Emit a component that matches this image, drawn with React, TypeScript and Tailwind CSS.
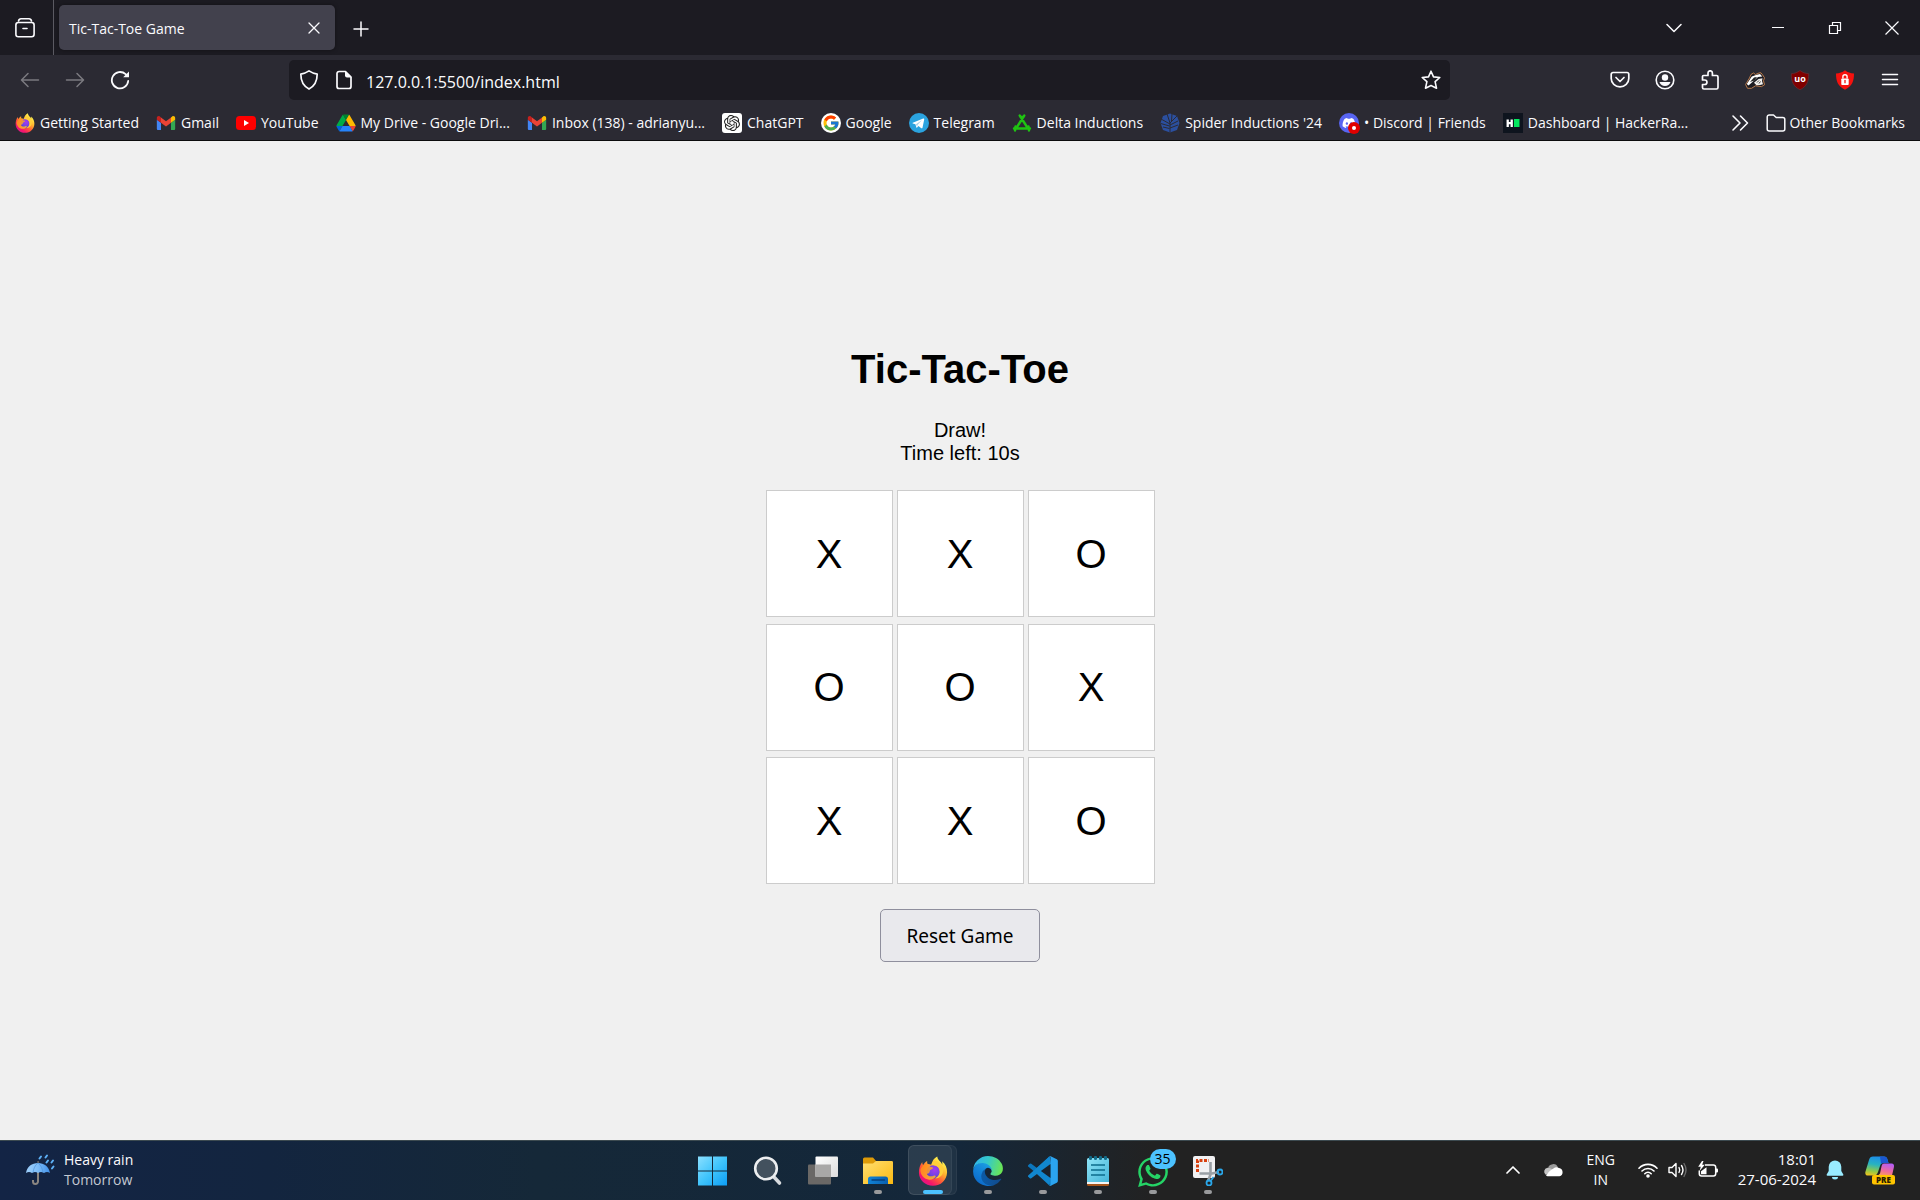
import React, { useState } from "react";
import { FcGoogle } from "react-icons/fc";
import { SiOpenai } from "react-icons/si";
import { FaDiscord, FaWhatsapp } from "react-icons/fa";

type IconProps = { className?: string; id?: string };

/* ---------- line icons of the browser chrome ---------- */

function Stroke({ children, className = "size-5", w = 1.5 }: { children: React.ReactNode; className?: string; w?: number }) {
  return (
    <svg viewBox="0 0 20 20" className={className} fill="none" stroke="currentColor" strokeWidth={w} strokeLinecap="round" strokeLinejoin="round" aria-hidden="true">
      {children}
    </svg>
  );
}

const ViewIcon = () => (
  <Stroke w={1.6}>
    <path d="M3.500 3Q4 .8 6 .8H14Q16 .8 16.500 3" />
    <rect x="0.900" y="4.500" width="18.200" height="14.300" rx="2.500" />
    <path d="M8 10.500h4" />
  </Stroke>
);
const BackIcon = () => (
  <Stroke>
    <path d="M18.500 10H1.800M8 3.500 1.500 10 8 16.500" />
  </Stroke>
);
const ForwardIcon = () => (
  <Stroke>
    <path d="M1.500 10h16.700M12 3.500l6.500 6.500-6.500 6.500" />
  </Stroke>
);
const ReloadIcon = () => (
  <Stroke w={1.8}>
    <path d="M18.200 11A8.200 8.200 0 1 1 15.600 4.200L17 5.500" />
    <path d="M19 1.500v5.800h-5.800z" fill="currentColor" stroke="none" />
  </Stroke>
);
const ShieldIcon = () => (
  <Stroke w={1.7}>
    <path d="M10 .9c2.500 1.700 5 2.700 8.200 3.200 0 6.200-1.700 11.600-8.200 15C3.500 15.700 1.800 10.300 1.800 4.100 5 3.600 7.500 2.600 10 .9z" />
  </Stroke>
);
const PageIcon = () => (
  <Stroke w={1.7}>
    <path d="M11.500 1.500H5a2 2 0 0 0-2 2v13a2 2 0 0 0 2 2h10a2 2 0 0 0 2-2V7z" />
    <path d="M11 1v4.500a2 2 0 0 0 2 2h4.500z" fill="currentColor" stroke="none" />
  </Stroke>
);
const StarIcon = () => (
  <Stroke w={1.6}>
    <path d="M10 1.200l2.500 5.700 6.300.6-4.700 4.200 1.400 6.500L10 15.500l-5.500 2.700 1.400-6.500L1.200 7.500l6.300-.6z" />
  </Stroke>
);
const PocketIcon = () => (
  <Stroke w={1.7}>
    <path d="M3 2.500h14a1.800 1.800 0 0 1 1.800 1.800V8.500a8.800 8.300 0 0 1-17.600 0V4.300A1.800 1.800 0 0 1 3 2.500z" />
    <path d="M6 7.500l4 4 4-4" />
  </Stroke>
);
const AccountIcon = () => (
  <Stroke w={1.6}>
    <circle cx="10" cy="10" r="8.800" />
    <circle cx="10" cy="7.500" r="3.200" fill="currentColor" stroke="none" />
    <path d="M4.500 12h11c-.8 2.500-2.800 4-5.500 4s-4.700-1.500-5.500-4z" fill="currentColor" stroke="none" />
  </Stroke>
);
const PuzzleIcon = () => (
  <Stroke w={1.7}>
    <path d="M2.500 9V6.500a1 1 0 0 1 1-1H8V3a2.200 2.200 0 0 1 4.400 0v2.500h4.100a1.500 1.500 0 0 1 1.500 1.500v10.500a1.500 1.500 0 0 1-1.500 1.500H4a1.500 1.500 0 0 1-1.500-1.500V14.500h2.200a2.200 2.200 0 0 0 0-4.500H2.500z" />
  </Stroke>
);
const MenuIcon = () => (
  <Stroke w={1.5}>
    <path d="M2.500 4.500h15M2.500 9.500h15M2.500 14.500h15" />
  </Stroke>
);
const FolderIcon = () => (
  <Stroke w={1.5}>
    <path d="M1.200 16V4a2 2 0 0 1 2-2h4.300l2.700 2.500h6.600a2 2 0 0 1 2 2V16a2 2 0 0 1-2 2H3.200a2 2 0 0 1-2-2z" />
  </Stroke>
);
const OverflowIcon = () => (
  <Stroke w={1.6}>
    <path d="M3 3l7 7-7 7M10.500 3l7 7-7 7" />
  </Stroke>
);

/* ---------- extension icons ---------- */

const BadgerIcon = () => (
  <svg viewBox="0 0 20 20" className="size-5" aria-hidden="true">
    <path d="M.6 14.500L4.500 8 6 4.500l2.500-1.500 2 1.500 3.500-1.500L16 2.800l1.500 2 2 3-1 3 1 4-3 1.800-6-.8-4 2.500H2.500z" fill="#1c1b22" stroke="#c98550" strokeWidth=".9" />
    <path d="M1.800 14l5-7.500L11 5l4-1 2.300 2.500-4.300.5-5 4.500-4.500 4z" fill="#fff" />
    <path d="M9 12.800L13.500 9l4-.8-.5 2.800 1 3.200-3 .8-3.500.3z" fill="#f1efec" />
    <path d="M5 12l4-4.500 3-.5-2.500 3.500z" fill="#222" />
    <path d="M12 12.500l2-2M14 13.500l1.500-2" stroke="#222" strokeWidth=".9" />
  </svg>
);
const UblockIcon = () => (
  <svg viewBox="0 0 20 20" className="size-5" aria-hidden="true">
    <path d="M10 .5c2.500 2 5.500 3 8.700 3.200C18.800 11 17 16.500 10 19.700 3 16.500 1.200 11 1.300 3.700 4.500 3.500 7.500 2.500 10 .5z" fill="#800000" stroke="#65353c" strokeWidth=".6" />
    <text x="10" y="12" textAnchor="middle" fontSize="9" fontWeight="700" fill="#fff" fontFamily="Open Sans, sans-serif">uo</text>
  </svg>
);
const LockShieldIcon = () => (
  <svg viewBox="0 0 20 20" className="size-5" aria-hidden="true">
    <path d="M10 .3c2.700 2.200 5.500 3 9 3.300C19 11 17.200 16.500 10 19.800 2.800 16.500 1 11 1 3.600 4.500 3.300 7.300 2.500 10 .3z" fill="#f5120f" />
    <rect x="6.300" y="8.500" width="7.400" height="6.500" rx=".8" fill="#fff" />
    <path d="M7.900 8.500V6.800a2.100 2.100 0 0 1 4.200 0v1.700" fill="none" stroke="#fff" strokeWidth="1.400" />
    <path d="M10 10.500v2.200" stroke="#f5120f" strokeWidth="1.300" strokeLinecap="round" />
  </svg>
);

/* ---------- site icons ---------- */

function FirefoxIcon({ className = "size-5", id = "ff" }: IconProps) {
  return (
    <svg viewBox="0 0 32 32" className={className} aria-hidden="true">
      <defs>
        <linearGradient id={id + "a"} x1="0.850" y1="0.100" x2="0.200" y2="0.950">
          <stop offset=".05" stopColor="#fff44f" />
          <stop offset=".35" stopColor="#ffb22e" />
          <stop offset=".6" stopColor="#ff5b36" />
          <stop offset=".85" stopColor="#f5156c" />
          <stop offset="1" stopColor="#e31587" />
        </linearGradient>
        <radialGradient id={id + "b"} cx=".6" cy=".35" r=".7">
          <stop offset="0" stopColor="#a63bf0" />
          <stop offset=".6" stopColor="#7542e5" />
          <stop offset="1" stopColor="#4a3fc4" />
        </radialGradient>
        <linearGradient id={id + "c"} x1="0" y1="0" x2="1" y2="1">
          <stop offset="0" stopColor="#ff8a16" />
          <stop offset="1" stopColor="#ffbd30" />
        </linearGradient>
      </defs>
      <path d="M20.500.5c.3 2.500 1.800 4.200 3.600 6 .8.800 1.400 1.800 1.700 2.800.3-1.500.2-2.800-.2-3.800 3.800 3 5.600 7.400 5.400 12C30.700 25.700 24.300 31.700 16 31.700S1 25.500 1 17.500c0-4 1-8 3.500-11.200.1 1.500.4 2.500 1 3.300C6.300 8 8 6.300 9.800 5.300c-.2 1.300.1 2.500.6 3.300 1.300 0 2.600.2 3.800.7C15 5.500 17 2 20.500.5z" fill={`url(#${id}a)`} />
      <circle cx="16.300" cy="17" r="7.200" fill={`url(#${id}b)`} />
      <path d="M14.200 9.300c2 .2 5.800.5 7.800 3.500 2.500 3.800.7 9.500-4 11 5.500.2 9.500-4 9-10C26.700 9.500 23 8 20.500 5.500c-2.500-.5-5.500 1-6.300 3.800z" fill="#ffcf3a" />
      <path d="M2.500 15c1-3.500 4-6.300 7.900-6.400.6 1.300 1.600 2.200 2.500 2.800 1.600.4 3 .7 3.200 1.200-.1 1-1.800 1.600-3 2.400-.8.600-.4 1.800-1 2.700-.5.800-1.700 1.300-2.800 1.300 1.500 2.700 4.700 3.300 7 2.200 1.300-.6 2.300-.5 2.700.3-1.200 2.500-4 4-7 3.800C6.500 25 2.500 20 2.500 15z" fill={`url(#${id}c)`} opacity=".85" />
    </svg>
  );
}
const GmailIcon = () => (
  <svg viewBox="48 40 96 70" className="size-5" aria-hidden="true">
    <path fill="#4285f4" d="M58 108h14V74L52 59v43c0 3.320 2.690 6 6 6" />
    <path fill="#34a853" d="M120 108h14c3.320 0 6-2.690 6-6V59l-20 15" />
    <path fill="#fbbc04" d="M120 48v26l20-15v-8c0-7.420-8.470-11.650-14.400-7.200" />
    <path fill="#ea4335" d="M72 74V48l24 18 24-18v26L96 92" />
    <path fill="#c5221f" d="M52 51v8l20 15V48l-5.600-4.200c-5.940-4.450-14.400-.22-14.400 7.200" />
  </svg>
);
const YouTubeIcon = () => (
  <svg viewBox="0 0 20 20" className="size-5" aria-hidden="true">
    <rect x="0" y="3" width="20" height="14" rx="3.500" fill="#f00" />
    <path d="M8 7v6l5-3z" fill="#fff" />
  </svg>
);
const DriveIcon = () => (
  <svg viewBox="-2 -4 91 86" className="size-5" aria-hidden="true">
    <path d="m6.600 66.850 3.850 6.650c.8 1.400 1.950 2.500 3.300 3.300l13.750-23.800h-27.500c0 1.550.4 3.100 1.200 4.500z" fill="#0066da" />
    <path d="m43.650 25-13.750-23.800c-1.350.8-2.500 1.900-3.300 3.300l-25.400 44a9.060 9.060 0 0 0 -1.200 4.500h27.500z" fill="#00ac47" />
    <path d="m73.550 76.800c1.350-.8 2.500-1.900 3.300-3.300l1.600-2.750 7.650-13.250c.8-1.400 1.200-2.950 1.200-4.500h-27.502l5.852 11.500z" fill="#ea4335" />
    <path d="m43.650 25 13.750-23.800c-1.350-.8-2.900-1.200-4.500-1.200h-18.500c-1.600 0-3.150.45-4.500 1.200z" fill="#00832d" />
    <path d="m59.800 53h-32.300l-13.750 23.800c1.350.8 2.900 1.200 4.500 1.200h50.800c1.600 0 3.150-.45 4.500-1.200z" fill="#2684fc" />
    <path d="m73.400 26.500-12.700-22c-.8-1.400-1.950-2.500-3.300-3.300l-13.750 23.800 16.150 28h27.450c0-1.550-.4-3.100-1.200-4.500z" fill="#ffba00" />
  </svg>
);
const ChatGptIcon = () => (
  <span className="grid size-5 place-items-center rounded-[3px] bg-white">
    <SiOpenai className="size-4 text-[#222]" />
  </span>
);
const GoogleIcon = () => (
  <span className="grid size-5 place-items-center rounded-full bg-white">
    <FcGoogle className="size-[18px]" />
  </span>
);
const TelegramIcon = () => (
  <svg viewBox="0 0 20 20" className="size-5" aria-hidden="true">
    <circle cx="10" cy="10" r="10" fill="#2ba3df" />
    <path d="M3.800 9.700l10.400-4.100c.6-.2 1.200.2 1 1l-1.700 8.100c-.2.700-.7.800-1.200.5l-2.800-2.100-1.400 1.400c-.3.300-.6.200-.7-.1l-1-3.200-2.600-.8c-.5-.2-.5-.5 0-.7z" fill="#fff" />
    <path d="M7 11.300l6-4.200-4.500 4.800-.4 2z" fill="#a9cfe5" />
  </svg>
);
const DeltaIcon = () => (
  <svg viewBox="0 0 20 20" className="size-5" fill="none" stroke="#1fc312" strokeWidth="2.400" strokeLinecap="round" strokeLinejoin="round" aria-hidden="true">
    <path d="M7.700 2.500L16 15.500M12.300 2.500L4 15.500M2 15.500h16M8.500 4h3" />
    <path d="M3.500 13.500L3 17.500M16.500 13.500l.5 4" />
  </svg>
);
const SpiderIcon = () => (
  <svg viewBox="0 0 20 20" className="size-5" aria-hidden="true">
    <path d="M10 .5l7 2.500 2.500 7-2.500 7-7 2.500L3 17 .5 10 3 3z" fill="#2b4f9e" />
    <g fill="none" stroke="#2b2a33" strokeWidth="1">
      <path d="M10 19.500V10L17 3M10 12l8-4M10 15l8-3M10 10L7 .8M10 11L1 6M9.500 13L.8 10.500M9.500 15.500L3 14M11.500 8L12 1" />
    </g>
  </svg>
);
const DiscordIcon = () => (
  <span className="relative grid size-5 place-items-center rounded-full bg-[#5865f2]">
    <FaDiscord className="size-3.5 text-white" />
    <span className="absolute -right-px -bottom-px grid size-3 place-items-center rounded-full bg-[#e00000]">
      <span className="size-1 rounded-full bg-white" />
    </span>
  </span>
);
const HackerRankIcon = () => (
  <svg viewBox="0 0 20 20" className="size-5" aria-hidden="true">
    <rect width="20" height="20" fill="#0e141e" />
    <path d="M4.700 6.500V14M8.700 6.500V14M5 10.200h3.500" stroke="#fff" strokeWidth="2.300" />
    <rect x="11" y="6" width="5.500" height="8" fill="#05e85f" />
  </svg>
);

/* ---------- taskbar icons ---------- */

const UmbrellaIcon = () => (
  <svg viewBox="0 0 30 32" className="h-8 w-[30px]" aria-hidden="true">
    <defs>
      <linearGradient id="umb" x1="0" y1="0" x2="1" y2="0">
        <stop offset="0" stopColor="#9fd0fb" />
        <stop offset=".5" stopColor="#7dbcf8" />
        <stop offset="1" stopColor="#3f8fe8" />
      </linearGradient>
    </defs>
    <path d="M13 18v9.500a2.500 2.500 0 0 1-5 0V26" fill="none" stroke="#8a8580" strokeWidth="2" />
    <path d="M12.400 7h1.400v3h-1.400z" fill="#6e6a66" />
    <path d="M1 19C2 12.500 7 9 13 9s11 3.500 12 10c-2-1.300-4-1.300-6 0-2-1.300-4-1.300-6 0-2-1.300-4-1.300-6 0-2-1.300-4-1.300-6 0z" fill="url(#umb)" />
    <path d="M13 9c-3 2-4.500 6-5 9.500M13 9c3 2 4.500 6 5 9.500" stroke="#4d93dc" strokeWidth=".7" fill="none" />
    <path d="M14.500 4.500l1.500-2M20.500 3.500l1.500-2M21.500 8.500l1.500-2M26.500 8.500l1.500-2M27 14.500l1.500-2" stroke="#5db1f7" strokeWidth="2" strokeLinecap="round" />
  </svg>
);
const WindowsIcon = () => (
  <svg viewBox="0 0 30 30" className="size-[30px]" aria-hidden="true">
    <defs>
      <linearGradient id="win" gradientUnits="userSpaceOnUse" x1="0" y1="0" x2="30" y2="30">
        <stop offset="0" stopColor="#8ce0ff" />
        <stop offset=".5" stopColor="#3fc4fc" />
        <stop offset="1" stopColor="#0a9bf5" />
      </linearGradient>
    </defs>
    <path d="M0 .5h14v14H0zM15 .5h14v14H15zM0 15.500h14v14H0zM15 15.500h14v14H15z" fill="url(#win)" />
  </svg>
);
const SearchIcon = () => (
  <svg viewBox="0 0 30 30" className="size-[30px]" aria-hidden="true">
    <path d="M20 20l6.500 7" stroke="#d7dade" strokeWidth="3.600" strokeLinecap="round" />
    <circle cx="13" cy="12.500" r="10.800" fill="#43515e" stroke="#eceef0" strokeWidth="2.600" />
  </svg>
);
const TaskViewIcon = () => (
  <svg viewBox="0 0 30 30" className="size-[30px]" aria-hidden="true">
    <defs>
      <linearGradient id="tv" x1="0" y1="0" x2="1" y2="1">
        <stop offset="0" stopColor="#fff" />
        <stop offset="1" stopColor="#dcdcdc" />
      </linearGradient>
    </defs>
    <rect x="0" y="8.500" width="23" height="20" rx="1" fill="#6a6866" />
    <rect x="7.500" y=".5" width="22.500" height="20.500" rx="1" fill="url(#tv)" />
    <rect x="7.500" y="8.500" width="15.500" height="12.500" fill="#a9a8a7" />
  </svg>
);
const ExplorerIcon = () => (
  <svg viewBox="0 0 30 30" className="size-[30px]" aria-hidden="true">
    <defs>
      <linearGradient id="fold" x1="0" y1="0" x2="1" y2="1">
        <stop offset="0" stopColor="#ffdf72" />
        <stop offset="1" stopColor="#fbb911" />
      </linearGradient>
      <linearGradient id="foldb" x1="0" y1="0" x2="1" y2="0">
        <stop offset="0" stopColor="#1183d6" />
        <stop offset="1" stopColor="#0a5fae" />
      </linearGradient>
    </defs>
    <path d="M0 3a1.500 1.500 0 0 1 1.500-1.500H10L13 5h15.500A1.500 1.500 0 0 1 30 6.500V10H0z" fill="#dd9a08" />
    <path d="M0 7.500h10L13 5h15.500A1.500 1.500 0 0 1 30 6.500V28H0z" fill="url(#fold)" />
    <path d="M5 28v-5a2.500 2.500 0 0 1 2.500-2.500h15A2.500 2.500 0 0 1 25 23v5z" fill="url(#foldb)" />
    <path d="M9 24h12.500" stroke="#063f7c" strokeWidth="1.300" strokeLinecap="round" />
  </svg>
);
const EdgeIcon = () => (
  <svg viewBox="0 0 256 258" className="size-[30px]" aria-hidden="true">
    <defs>
      <linearGradient id="ea" x1=".2" y1=".5" x2="1" y2=".6">
        <stop offset="0" stopColor="#0c59a4" />
        <stop offset="1" stopColor="#114a8b" />
      </linearGradient>
      <linearGradient id="eb" x1=".8" y1=".1" x2=".3" y2="1">
        <stop offset="0" stopColor="#1b9de2" />
        <stop offset=".5" stopColor="#127fd6" />
        <stop offset="1" stopColor="#0c68c8" />
      </linearGradient>
      <linearGradient id="ec" x1="0" y1=".4" x2="1" y2=".6">
        <stop offset="0" stopColor="#2fb4ec" />
        <stop offset=".45" stopColor="#35c9c9" />
        <stop offset="1" stopColor="#6ce64f" />
      </linearGradient>
    </defs>
    <path d="M235.680 195.460a93.730 93.730 0 0 1-10.540 4.710 101.870 101.870 0 0 1-35.900 6.460c-47.320 0-88.540-32.550-88.540-74.320A31.480 31.480 0 0 1 117.130 105c-42.800 1.800-53.800 46.400-53.800 72.530 0 73.880 68.090 80.370 82.760 80.370 7.910 0 19.840-2.300 27-4.560l1.310-.44a128.340 128.340 0 0 0 66.600-51.800 4 4 0 0 0-5.320-5.640z" fill="url(#ea)" />
    <path d="M105.730 241.420A79.200 79.200 0 0 1 83 220.080a80.720 80.720 0 0 1 29.530-115.080c3.120-1.470 8.450-4.130 15.540-4a32.350 32.350 0 0 1 25.690 13 31.880 31.880 0 0 1 6.360 18.660c0-.21 24.460-79.600-80-79.600C36.200 53.060 0 94.700 0 131.270a130.150 130.150 0 0 0 12.110 56 128 128 0 0 0 156.380 62.110 75.550 75.550 0 0 1-62.780-8z" fill="url(#eb)" />
    <path d="M152.330 148.860c-.81 1.050-3.300 2.500-3.300 5.660 0 2.610 1.700 5.120 4.720 7.230 14.380 10 41.490 8.680 41.560 8.680a59.560 59.560 0 0 0 30.270-8.350 61.380 61.380 0 0 0 30.430-52.880c.26-22.410-8-37.310-11.340-43.910C223.460 23.840 177.720 0 128 0A128 128 0 0 0 0 126.200c.48-36.540 36.800-66.050 80-66.050 3.500 0 23.460.34 42 10.070 16.340 8.580 24.900 18.940 30.850 29.210 6.180 10.670 7.280 24.150 7.280 29.520s-2.740 13.330-7.800 19.910z" fill="url(#ec)" />
  </svg>
);
const VsCodeIcon = () => (
  <svg viewBox="0 0 100 100" className="size-[30px]" aria-hidden="true">
    <path d="M72 1 30 40 11 25.500a4 4 0 0 0-5 .2L1.500 30a4 4 0 0 0 0 6L78 99l3-27L74 31z" fill="#0b76bd" />
    <path d="M72 99 30 60 11 74.500a4 4 0 0 1-5-.2L1.500 70a4 4 0 0 1 0-6L72 1l5 27-3 41z" fill="#1187cf" />
    <path d="M75.500 99a6 6 0 0 1-7-1.200c2.300 2.300 6.300.7 6.300-2.600V4.800c0-3.300-4-4.900-6.300-2.600A6 6 0 0 1 75.500 1L96 10.900a6 6 0 0 1 3.500 5.600v67a6 6 0 0 1-3.500 5.600z" fill="#2ba4f0" />
    <path d="M75 27 43 50l32 23z" fill="#19222d" />
  </svg>
);
const NotepadIcon = () => (
  <svg viewBox="0 0 30 30" className="size-[30px]" aria-hidden="true">
    <defs>
      <linearGradient id="np" x1="0" y1="0" x2="1" y2="1">
        <stop offset="0" stopColor="#8fe4f7" />
        <stop offset="1" stopColor="#45b5d8" />
      </linearGradient>
    </defs>
    <path d="M4 26h22v2.500a1.500 1.500 0 0 1-1.500 1.500h-19A1.500 1.500 0 0 1 4 28.500z" fill="#a5541a" />
    <path d="M4 25h22v3H4z" fill="#f4f4f4" />
    <path d="M4 3.500A1.500 1.500 0 0 1 5.500 2h19A1.500 1.500 0 0 1 26 3.500V26H4z" fill="url(#np)" />
    <path d="M8 9h14M8 14h14M8 19h14" stroke="#0d6c8c" strokeWidth="1.700" />
    <path d="M7.500 1.500v1M12.500 1.500v1M17.500 1.500v1M22.500 1.500v1" stroke="#116a88" strokeWidth="3.200" strokeLinecap="round" />
  </svg>
);
const WhatsAppIcon = () => (
  <span className="relative block size-[30px]">
    <FaWhatsapp className="-m-0.5 size-[34px] text-[#25d366]" />
    <span className="absolute -top-1.5 left-3 flex h-5 w-[26px] items-center justify-center rounded-full bg-[#4cc2ff] text-sm text-black">35</span>
  </span>
);
const SnippingIcon = () => (
  <svg viewBox="0 0 30 30" className="size-[30px]" aria-hidden="true">
    <rect x="0" y="0" width="22" height="22" rx="2" fill="#f1f1f3" />
    <path d="M4.500 16V4.500H16" fill="none" stroke="#d8400f" strokeWidth="3" strokeDasharray="3 1.500" />
    <path d="M17.500 6v12.500L15 25M6.500 17.500H19L26 16" fill="none" stroke="#9aa0a6" strokeWidth="2.600" />
    <circle cx="27" cy="16" r="2.500" fill="none" stroke="#2aa6e8" strokeWidth="1.800" />
    <circle cx="16" cy="27" r="2.500" fill="none" stroke="#2aa6e8" strokeWidth="1.800" />
    <path d="M18 24.500l2.500-3.500" stroke="#2aa6e8" strokeWidth="1.800" />
  </svg>
);
const CloudIcon = () => (
  <svg viewBox="0 0 20 14" className="h-3.5 w-5" aria-hidden="true">
    <path d="M5 5.500A5.200 5.200 0 0 1 15 4.500l-5 4z" fill="#9b9b9b" />
    <path d="M4.500 4.700c2 0 3.500.8 5.500 2.300L3 12A4 4 0 0 1 4.500 4.700z" fill="#c4c4c4" />
    <path d="M3 12.700c2-3.500 5-6.200 9-8.200a5 5 0 0 1 4 .5 4.200 4.200 0 0 1 .5 8.200H4.500z" fill="#fff" />
  </svg>
);
const WifiIcon = () => (
  <svg viewBox="0 0 20 16" className="h-4 w-5" fill="none" stroke="#fff" strokeWidth="1.600" strokeLinecap="round" aria-hidden="true">
    <path d="M1 6.200a12.500 12.500 0 0 1 18 0M4 9a8.500 8.500 0 0 1 12 0M6.800 11.700a4.600 4.600 0 0 1 6.400 0" />
    <circle cx="10" cy="14" r="1" fill="#fff" />
  </svg>
);
const SpeakerIcon = () => (
  <svg viewBox="0 0 20 18" className="h-[18px] w-5" fill="none" stroke="#fff" strokeWidth="1.400" strokeLinecap="round" strokeLinejoin="round" aria-hidden="true">
    <path d="M1 6.500v5h3l4 4V2.500l-4 4z" />
    <path d="M11 6.500q1.500 2.500 0 5M13.500 4.500q3 4.500 0 9" />
    <path d="M16 2.500q4 6.500 0 13" stroke="#6a6a6a" />
  </svg>
);
const BatteryIcon = () => (
  <svg viewBox="0 0 20 18" className="h-[18px] w-5" aria-hidden="true">
    <path d="M7 4h8.500A2.200 2.200 0 0 1 17.700 6.200v6.600A2.200 2.200 0 0 1 15.500 15h-12A2.200 2.200 0 0 1 1.300 12.800V9.500" fill="none" stroke="#fff" strokeWidth="1.500" />
    <path d="M18 7.500h1a1 1 0 0 1 1 1v2a1 1 0 0 1-1 1h-1z" fill="#fff" />
    <path d="M3 13.200v-3l5.500-4v7z" fill="#fff" />
    <path d="M4 0L.2 5.800h2.600L1.500 10 6.800 3.800H4.200L5.500 0z" fill="#fff" />
  </svg>
);
const BellIcon = () => (
  <svg viewBox="0 0 18 20" className="h-5 w-[18px]" fill="#99ebff" aria-hidden="true">
    <path d="M9 .5a6.300 6.300 0 0 1 6.300 6.300V11l2 3.500a.8.800 0 0 1-.7 1.200H1.400a.8.800 0 0 1-.7-1.200l2-3.500V6.800A6.300 6.300 0 0 1 9 .5zM6 17h6a3 2.500 0 0 1-6 0z" />
  </svg>
);
const CopilotIcon = () => (
  <svg viewBox="0 0 30 30" className="size-[30px]" aria-hidden="true">
    <defs>
      <linearGradient id="cpa" x1=".4" y1="0" x2=".2" y2="1">
        <stop offset="0" stopColor="#1d8fe8" />
        <stop offset=".4" stopColor="#28b3c0" />
        <stop offset=".75" stopColor="#8fc94a" />
        <stop offset="1" stopColor="#f0c31c" />
      </linearGradient>
      <linearGradient id="cpb" x1=".6" y1="0" x2=".3" y2="1">
        <stop offset="0" stopColor="#b45cf5" />
        <stop offset=".6" stopColor="#ef6b9d" />
        <stop offset="1" stopColor="#f79a62" />
      </linearGradient>
    </defs>
    <path d="M8 1.500h11c2 0 3 1 3.500 3L23.500 8h-5c-2 0-3 1-3.500 3l-2 6c-.8 2.500-2 3.500-4 3.500H3c-2.200 0-3.200-1.600-2.500-4L4 5c.6-2.500 2-3.500 4-3.500z" fill="url(#cpa)" />
    <path d="M15 1.500h4c2 0 3 1 3.500 3L23.500 8h-5c-1 0-1.800.3-2.500 1z" fill="#1b57d0" />
    <path d="M19 8.500h7.500c2 0 3 1.500 2.400 3.700L27 20.500H13l2-2 1.500-7c.4-2 1.200-3 2.500-3z" fill="url(#cpb)" />
    <rect x="7" y="20" width="23" height="9.500" rx="2" fill="#ffc400" />
    <text x="18.500" y="27.500" textAnchor="middle" fontSize="8" fontWeight="800" fill="#2b2000" fontFamily="Open Sans, sans-serif">PRE</text>
  </svg>
);

/* ---------- data ---------- */

const bookmarks = [
  { label: "Getting Started", icon: <FirefoxIcon id="ffb" /> },
  { label: "Gmail", icon: <GmailIcon /> },
  { label: "YouTube", icon: <YouTubeIcon /> },
  { label: "My Drive - Google Dri...", icon: <DriveIcon /> },
  { label: "Inbox (138) - adrianyu...", icon: <GmailIcon /> },
  { label: "ChatGPT", icon: <ChatGptIcon /> },
  { label: "Google", icon: <GoogleIcon /> },
  { label: "Telegram", icon: <TelegramIcon /> },
  { label: "Delta Inductions", icon: <DeltaIcon /> },
  { label: "Spider Inductions '24", icon: <SpiderIcon /> },
  { label: "• Discord | Friends", icon: <DiscordIcon /> },
  { label: "Dashboard | HackerRa...", icon: <HackerRankIcon /> },
];

const apps = [
  { name: "Start", icon: <WindowsIcon />, state: "idle" },
  { name: "Search", icon: <SearchIcon />, state: "idle" },
  { name: "Task View", icon: <TaskViewIcon />, state: "idle" },
  { name: "File Explorer", icon: <ExplorerIcon />, state: "open" },
  { name: "Firefox", icon: <FirefoxIcon className="size-[30px]" id="fft" />, state: "active" },
  { name: "Edge", icon: <EdgeIcon />, state: "open" },
  { name: "Visual Studio Code", icon: <VsCodeIcon />, state: "open" },
  { name: "Notepad", icon: <NotepadIcon />, state: "open" },
  { name: "WhatsApp", icon: <WhatsAppIcon />, state: "open" },
  { name: "Snipping Tool", icon: <SnippingIcon />, state: "open" },
];

function ToolButton({ label, children, dim = false }: { label: string; children: React.ReactNode; dim?: boolean }) {
  return (
    <button type="button" aria-label={label} className={dim ? "grid h-10 w-[45px] place-items-center text-[#7b7a80]" : "grid h-10 w-[45px] place-items-center"}>
      {children}
    </button>
  );
}

function TabStrip() {
  return (
    <header className="flex h-[55px] items-stretch bg-[#1c1b22]">
      <button type="button" aria-label="View recent browsing" className="grid w-[54px] place-items-center border-r border-[#5b5a62] pr-1">
        <ViewIcon />
      </button>
      <div className="mx-[5px] my-[5px] flex w-[276px] items-center justify-between rounded-[5px] bg-[#42414d] pr-[15px] pl-[10px] shadow-[0_0_4px_rgba(0,0,0,0.4)]">
        <span className="pt-0.5 text-sm">Tic-Tac-Toe Game</span>
        <button type="button" aria-label="Close tab">
          <svg viewBox="0 0 12 12" className="size-3" stroke="currentColor" strokeWidth="1.300" strokeLinecap="round" aria-hidden="true">
            <path d="M1 1l10 10M11 1L1 11" />
          </svg>
        </button>
      </div>
      <button type="button" aria-label="New tab" className="grid w-[42px] place-items-center pt-0.5">
        <svg viewBox="0 0 16 16" className="size-4" stroke="currentColor" strokeWidth="1.500" strokeLinecap="round" aria-hidden="true">
          <path d="M8 1v14M1 8h14" />
        </svg>
      </button>
      <div className="ml-auto flex items-center">
        <button type="button" aria-label="List all tabs" className="mr-[50px] grid h-full w-[50px] place-items-center">
          <svg viewBox="0 0 16 16" className="size-4" fill="none" stroke="currentColor" strokeWidth="1.500" strokeLinecap="round" strokeLinejoin="round" aria-hidden="true">
            <path d="M1 4.500l7 7 7-7" />
          </svg>
        </button>
        <button type="button" aria-label="Minimize" className="grid h-full w-[57px] place-items-center">
          <svg viewBox="0 0 14 14" className="size-3.5" stroke="currentColor" aria-hidden="true">
            <path d="M1 6.500h12" />
          </svg>
        </button>
        <button type="button" aria-label="Restore" className="grid h-full w-[57px] place-items-center">
          <svg viewBox="0 0 14 14" className="size-3.5" fill="none" stroke="currentColor" strokeWidth="1.200" aria-hidden="true">
            <path d="M1.500 4.500h8v8h-8zM4.500 4.500v-3h8v8h-3" />
          </svg>
        </button>
        <button type="button" aria-label="Close" className="grid h-full w-[57px] place-items-center">
          <svg viewBox="0 0 14 14" className="size-3.5" stroke="currentColor" strokeWidth="1.200" aria-hidden="true">
            <path d="M.5.5l13 13M13.500.5l-13 13" />
          </svg>
        </button>
      </div>
    </header>
  );
}

function NavBar() {
  const [url, setUrl] = useState("127.0.0.1:5500/index.html");
  return (
    <div className="flex h-[50px] items-center pr-2 pl-[7px]">
      <ToolButton label="Back" dim><BackIcon /></ToolButton>
      <ToolButton label="Forward" dim><ForwardIcon /></ToolButton>
      <ToolButton label="Reload"><ReloadIcon /></ToolButton>
      <div className="mx-[147px] flex h-10 flex-1 items-center rounded-[5px] bg-[#1c1b22] pr-[9px] pl-2.5">
        <ShieldIcon />
        <span className="ml-[15px]"><PageIcon /></span>
        <input aria-label="Address" value={url} onChange={(e) => setUrl(e.target.value)} className="ml-3 min-w-0 flex-1 bg-transparent pt-[3px] text-base outline-none" />
        <button type="button" aria-label="Bookmark this page"><StarIcon /></button>
      </div>
      <ToolButton label="Save to Pocket"><PocketIcon /></ToolButton>
      <ToolButton label="Account"><AccountIcon /></ToolButton>
      <ToolButton label="Extensions"><PuzzleIcon /></ToolButton>
      <ToolButton label="Privacy Badger"><BadgerIcon /></ToolButton>
      <ToolButton label="uBlock Origin"><UblockIcon /></ToolButton>
      <ToolButton label="Site lock"><LockShieldIcon /></ToolButton>
      <ToolButton label="Menu"><MenuIcon /></ToolButton>
    </div>
  );
}

function BookmarksBar() {
  return (
    <nav aria-label="Bookmarks" className="flex h-9 items-center border-b border-[#0c0c0d] px-[15px] pt-px text-sm whitespace-nowrap">
      <div className="flex items-center gap-[17px]">
        {bookmarks.map((b) => (
          <a key={b.label} href="#" className="flex items-center gap-[5px]">
            {b.icon}
            <span>{b.label}</span>
          </a>
        ))}
      </div>
      <button type="button" aria-label="More bookmarks" className="ml-auto"><OverflowIcon /></button>
      <button type="button" className="ml-4 flex items-center gap-1">
        <FolderIcon />
        Other Bookmarks
      </button>
    </nav>
  );
}

function Game() {
  const [board, setBoard] = useState<string[]>(["X", "X", "O", "O", "O", "X", "X", "X", "O"]);
  const [status, setStatus] = useState("Draw!");
  const filled = board.filter(Boolean).length;
  const play = (i: number) => {
    if (board[i]) return;
    const next = board.slice();
    next[i] = filled % 2 === 0 ? "X" : "O";
    setBoard(next);
    setStatus(filled === 8 ? "Draw!" : `Player ${filled % 2 === 0 ? "O" : "X"}'s turn`);
  };
  const reset = () => {
    setBoard(Array(9).fill(""));
    setStatus("Player X's turn");
  };
  return (
    <main className="flex flex-1 flex-col items-center justify-center bg-[#f0f0f0] font-['Liberation_Sans',Arial,sans-serif] text-black">
      <h1 className="my-[27px] text-[40px] leading-[46px] font-bold">Tic-Tac-Toe</h1>
      <div className="text-center text-xl leading-[23px]">
        <p>{status}</p>
        <p>Time left: 10s</p>
      </div>
      <div className="my-[25px] grid h-[394px] grid-cols-[repeat(3,127px)] grid-rows-[repeat(3,127px)] content-between gap-x-1">
        {board.map((mark, i) => (
          <button key={i} type="button" aria-label={`Cell ${i + 1}`} onClick={() => play(i)} className="border border-[#ccc] bg-white text-[40px] leading-none">
            {mark}
          </button>
        ))}
      </div>
      <button type="button" onClick={reset} className="h-[53px] w-40 rounded-[5px] border border-[#8f8f9d] bg-[#e9e9ed] pt-0.5 font-['Noto_Sans',sans-serif] text-[19px]">
        Reset Game
      </button>
    </main>
  );
}

function Taskbar() {
  return (
    <footer className="grid h-[60px] grid-cols-[1fr_auto_1fr] items-stretch border-t border-[#3c4a50] bg-[linear-gradient(90deg,#132445_0%,#13253f_14%,#152838_28%,#14273a_50%,#222222_60%,#222222_100%)] text-sm leading-5">
      <div className="flex items-center gap-[9px] pb-0.5 pl-[25px]">
        <UmbrellaIcon />
        <div>
          <p>Heavy rain</p>
          <p className="text-[#c3c8d2]">Tomorrow</p>
        </div>
      </div>
      <div className="flex">
        {apps.map((a) => (
          <button key={a.name} type="button" aria-label={a.name} className="relative grid w-[55px] place-items-center">
            {a.state === "active" && (
              <>
                <span className="absolute top-1 left-[3px] h-[50px] w-[49px] rounded-md border border-white/5 bg-white/5" />
                <span className="absolute top-1 left-[3px] h-[50px] w-[44px] rounded-md border border-white/5 bg-white/5" />
              </>
            )}
            <span className="relative">{a.icon}</span>
            {a.state === "open" && <span className="absolute bottom-1.5 h-1 w-2 rounded-full bg-[#999a9c]" />}
            {a.state === "active" && <span className="absolute bottom-1.5 h-1 w-5 rounded-full bg-[#4cc2ff]" />}
          </button>
        ))}
      </div>
      <div className="flex items-center justify-end pr-[25px] pb-0.5">
        <button type="button" aria-label="Show hidden icons">
          <svg viewBox="0 0 14 14" className="size-3.5" fill="none" stroke="#fff" strokeWidth="1.700" strokeLinecap="round" strokeLinejoin="round" aria-hidden="true">
            <path d="M1 10l6-6 6 6" />
          </svg>
        </button>
        <span className="ml-[23px]"><CloudIcon /></span>
        <span className="ml-[23px] w-[30px] text-center">ENG<br />IN</span>
        <span className="ml-[22px] flex items-center gap-2.5">
          <WifiIcon />
          <SpeakerIcon />
          <BatteryIcon />
        </span>
        <time className="ml-5 pb-0.5 text-right text-[15px]">18:01<br />27-06-2024</time>
        <span className="ml-2.5"><BellIcon /></span>
        <span className="ml-[21px]"><CopilotIcon /></span>
      </div>
    </footer>
  );
}

export default function App() {
  return (
    <div className="flex min-h-screen flex-col bg-[#2b2a33] font-['Open_Sans','Noto_Sans',sans-serif] text-[#fbfbfe]">
      <TabStrip />
      <NavBar />
      <BookmarksBar />
      <Game />
      <Taskbar />
    </div>
  );
}
